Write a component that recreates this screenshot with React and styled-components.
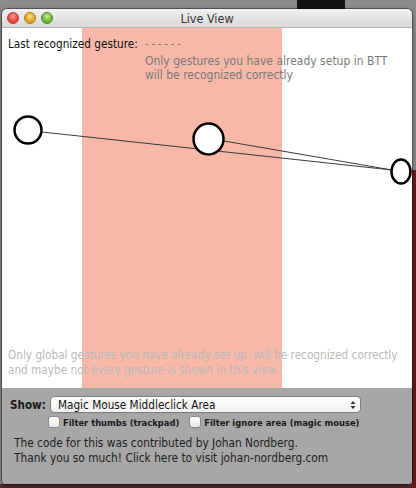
import React from 'react';
import styled, { createGlobalStyle } from 'styled-components';

const GlobalStyle = createGlobalStyle`
  html, body {
    margin: 0;
    padding: 0;
  }
  body {
    width: 416px;
    height: 488px;
    overflow: hidden;
    font-family: 'DejaVu Sans Condensed', 'Liberation Sans', sans-serif;
    white-space: nowrap;
  }
`;

const Desktop = styled.div`
  width: 416px;
  height: 488px;
  box-sizing: border-box;
  padding: 9px 4px 4px 2px;
  background:
    linear-gradient(#141414, #141414) 297px 0 / 48px 9px no-repeat,
    linear-gradient(#6b1a1a, #6b1a1a) 412px 170px / 4px 318px no-repeat,
    linear-gradient(#5a2a2a, #5a2a2a) 0 484px / 416px 4px no-repeat,
    #8c8c8c;
`;

const Window = styled.div`
  width: 410px;
  height: 475px;
  display: flex;
  flex-direction: column;
  border-radius: 5px 5px 4px 4px;
  overflow: hidden;
  box-shadow: 0 0 0 1px rgba(0, 0, 0, 0.35), 0 2px 6px rgba(0, 0, 0, 0.4);
`;

const TitleBar = styled.div`
  height: 19px;
  flex: none;
  display: flex;
  align-items: center;
  position: relative;
  padding-left: 5px;
  gap: 5px;
  background: linear-gradient(#f0f0f0, #d9d9d9);
  border-bottom: 1px solid #b4b4b4;
  box-sizing: border-box;
`;

const Light = styled.span`
  width: 12px;
  height: 12px;
  border-radius: 50%;
  box-sizing: border-box;
  border: 1px solid ${p => p.$edge};
  background: radial-gradient(circle at 50% 35%, ${p => p.$hi} 0%, ${p => p.$color} 60%);
`;

const Title = styled.div`
  position: absolute;
  left: 0;
  right: 0;
  text-align: center;
  font-size: 12.5px;
  color: #333;
  pointer-events: none;
`;

const Canvas = styled.div`
  position: relative;
  height: 360px;
  flex: none;
  background: #fff;
  display: flex;
  flex-direction: column;
  justify-content: space-between;
  box-sizing: border-box;
  padding: 9px 0 10px 6px;
`;

const Drawing = styled.svg`
  position: absolute;
  inset: 0;
  z-index: 0;
`;

const Header = styled.div`
  position: relative;
  display: grid;
  grid-template-columns: 137px auto;
  font-size: 11.7px;
  line-height: 14px;
  color: #111;
`;

const Dashes = styled.div`
  color: #777;
  letter-spacing: 2.6px;
`;

const Hint = styled.div`
  grid-column: 2;
  margin-top: 3px;
  font-size: 12px;
  color: #7a7a7a;
  line-height: 14px;
`;

const Footnote = styled.div`
  position: relative;
  font-size: 11.7px;
  line-height: 15px;
  color: #b9b9b9;
`;

const Panel = styled.div`
  flex: 1;
  background: #a7a7a7;
  padding: 8px 0 0 8px;
  display: flex;
  flex-direction: column;
`;

const ShowRow = styled.div`
  display: flex;
  align-items: center;
  gap: 4px;
`;

const ShowLabel = styled.span`
  font-size: 11.6px;
  font-weight: bold;
  color: #1a1a1a;
`;

const Select = styled.div`
  width: 311px;
  height: 17px;
  box-sizing: border-box;
  border: 1px solid #7d7d7d;
  border-radius: 4px;
  background: linear-gradient(#ffffff, #f1f1f1);
  display: flex;
  align-items: center;
  justify-content: space-between;
  padding: 0 4px 0 7px;
  font-size: 11.7px;
  color: #111;
`;

const Checks = styled.div`
  display: flex;
  gap: 10px;
  margin: 3px 0 0 38px;
`;

const Check = styled.label`
  display: flex;
  align-items: center;
  gap: 3px;
  font-size: 9.3px;
  font-weight: bold;
  color: #1a1a1a;
`;

const Box = styled.span`
  width: 12px;
  height: 12px;
  box-sizing: border-box;
  border: 1px solid #8a8a8a;
  border-radius: 3px;
  background: linear-gradient(#ffffff, #e8e8e8);
`;

const Credits = styled.div`
  margin: 8px 0 0 4px;
  font-size: 11.8px;
  line-height: 15px;
  color: #1c1c1c;
`;

const Arrows = () => (
  <svg width="6" height="10" viewBox="0 0 6 10">
    <path d="M0.5 4 L3 1 L5.5 4 Z M0.5 6 L3 9 L5.5 6 Z" fill="#333" />
  </svg>
);

const App = () => (
  <>
    <GlobalStyle />
    <Desktop>
      <Window>
        <TitleBar>
          <Light $color="#e0443e" $hi="#ff9c94" $edge="#b83a33" />
          <Light $color="#dea123" $hi="#ffe08a" $edge="#b07c1a" />
          <Light $color="#6cb534" $hi="#c4f096" $edge="#4f8a26" />
          <Title>Live View</Title>
        </TitleBar>
        <Canvas>
          <Drawing width="410" height="360" viewBox="0 0 410 360">
            <rect x="80" y="0" width="200" height="360" fill="#f7b8a8" />
            <line x1="40" y1="104" x2="390" y2="142" stroke="#3a3a3a" strokeWidth="1" />
            <line x1="222" y1="113" x2="390" y2="142" stroke="#3a3a3a" strokeWidth="1" />
            <ellipse cx="26" cy="102" rx="13.5" ry="13.5" fill="#fff" stroke="#000" strokeWidth="2.5" />
            <ellipse cx="206.5" cy="111" rx="15" ry="15.5" fill="#fff" stroke="#000" strokeWidth="2.5" />
            <ellipse cx="399" cy="143.5" rx="9.5" ry="12" fill="#fff" stroke="#000" strokeWidth="2.5" />
          </Drawing>
          <Header>
            <span>Last recognized gesture:</span>
            <Dashes>------</Dashes>
            <Hint>
              Only gestures you have already setup in BTT
              <br />
              will be recognized correctly
            </Hint>
          </Header>
          <Footnote>
            Only global gestures you have already set up&nbsp; will be recognized correctly
            <br />
            and maybe not every gesture is shown in this view.
          </Footnote>
        </Canvas>
        <Panel>
          <ShowRow>
            <ShowLabel>Show:</ShowLabel>
            <Select>
              <span>Magic Mouse Middleclick Area</span>
              <Arrows />
            </Select>
          </ShowRow>
          <Checks>
            <Check><Box />Filter thumbs (trackpad)</Check>
            <Check><Box />Filter ignore area (magic mouse)</Check>
          </Checks>
          <Credits>
            The code for this was contributed by Johan Nordberg.
            <br />
            Thank you so much! Click here to visit johan-nordberg.com
          </Credits>
        </Panel>
      </Window>
    </Desktop>
  </>
);

export default App;
